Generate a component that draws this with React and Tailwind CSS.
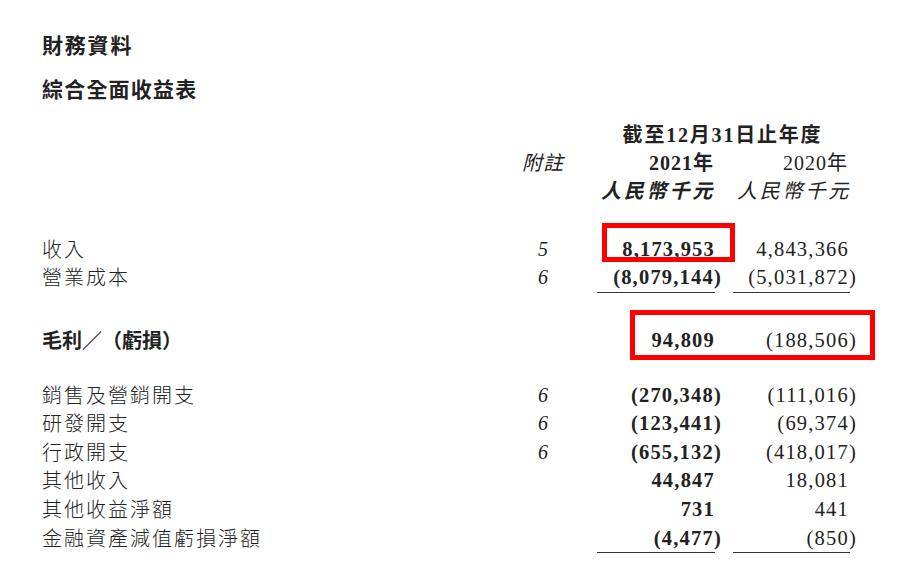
const serif = "font-['Liberation_Serif','Noto_Sans_CJK_TC',serif]";
const sans = "font-['Noto_Sans_CJK_TC','Noto_Sans',sans-serif]";

const topRows = [
  { label: "收入", note: "5", a: "8,173,953", b: "4,843,366" },
  { label: "營業成本", note: "6", a: "(8,079,144)", b: "(5,031,872)" },
];

const expenseRows = [
  { label: "銷售及營銷開支", note: "6", a: "(270,348)", b: "(111,016)" },
  { label: "研發開支", note: "6", a: "(123,441)", b: "(69,374)" },
  { label: "行政開支", note: "6", a: "(655,132)", b: "(418,017)" },
  { label: "其他收入", note: "", a: "44,847", b: "18,081" },
  { label: "其他收益淨額", note: "", a: "731", b: "441" },
  { label: "金融資產減值虧損淨額", note: "", a: "(4,477)", b: "(850)" },
];

const Row = ({ label, note, a, b, strong }) => (
  <div className="flex h-[28.6px] items-center leading-[28.6px] text-[20px]">
    <div
      className={
        strong
          ? `${sans} w-[471px] font-bold tracking-[0px]`
          : `${sans} w-[471px] font-light tracking-[2px]`
      }
    >
      {label}
    </div>
    <div className={`${serif} w-[60px] text-center italic`}>{note}</div>
    <div
      className={
        a.startsWith("(")
          ? `${serif} ml-[24px] w-[125px] text-right font-bold tracking-[1.2px] text-[20.5px]`
          : `${serif} ml-[24px] w-[125px] pr-[7px] text-right font-bold tracking-[1.2px] text-[20.5px]`
      }
    >
      {a}
    </div>
    <div
      className={
        b.startsWith("(")
          ? `${serif} ml-[11px] w-[124px] text-right tracking-[1.2px] text-[20.5px]`
          : `${serif} ml-[11px] w-[124px] pr-[8px] text-right tracking-[1.2px] text-[20.5px]`
      }
    >
      {b}
    </div>
  </div>
);

const Underlines = () => (
  <div className="flex h-px">
    <div className="ml-[555px] w-[118px] bg-[#333]" />
    <div className="ml-[18px] w-[117px] bg-[#333]" />
  </div>
);

export default function App() {
  return (
    <div className="relative h-[573px] w-[900px] overflow-hidden bg-white pl-[42px] pt-[30px] text-[#222]">
      <h1 className={`${sans} h-[28px] text-[21px] font-bold leading-[28px] tracking-[1.8px]`}>
        財務資料
      </h1>
      <h2 className={`${sans} mt-[16px] h-[28px] text-[21px] font-bold leading-[28px] tracking-[1.2px]`}>
        綜合全面收益表
      </h2>

      {/* column header */}
      <div className={`${serif} mt-[19px] text-[20px]`}>
        <div className="flex h-[28px] items-center leading-[28px]">
          <div className="ml-[555px] w-[251px] text-center font-bold tracking-[1.8px]">
            截至12月31日止年度
          </div>
        </div>
        <div className="flex h-[28px] items-center leading-[28px]">
          <div className="w-[471px]" />
          <div className="w-[60px] text-center italic tracking-[1px]">附註</div>
          <div className="ml-[24px] w-[125px] pr-[8px] text-right font-bold tracking-[1px]">
            2021年
          </div>
          <div className="ml-[11px] w-[124px] pr-[9px] text-right tracking-[1px]">2020年</div>
        </div>
        <div className="flex h-[28px] items-center leading-[28px]">
          <div className="ml-[555px] w-[118px] text-right font-bold italic tracking-[2.8px]">
            人民幣千元
          </div>
          <div className="ml-[18px] w-[118px] text-right italic tracking-[2.8px]">人民幣千元</div>
        </div>
      </div>

      <div className="mt-[29.7px]">
        {topRows.map((r) => (
          <Row key={r.label} {...r} />
        ))}
      </div>
      <Underlines />

      <div className="mt-[32.7px]">
        <Row label="毛利／（虧損）" note="" a="94,809" b="(188,506)" strong />
      </div>

      <div className="mt-[26.4px]">
        {expenseRows.map((r) => (
          <Row key={r.label} {...r} />
        ))}
      </div>
      <Underlines />

      {/* red highlight boxes */}
      <div className="absolute left-[602px] top-[223px] h-[39px] w-[133px] border-[5px] border-[#ff0000]" />
      <div className="absolute left-[630px] top-[310px] h-[50px] w-[245px] border-[5px] border-[#ff0000]" />
    </div>
  );
}
